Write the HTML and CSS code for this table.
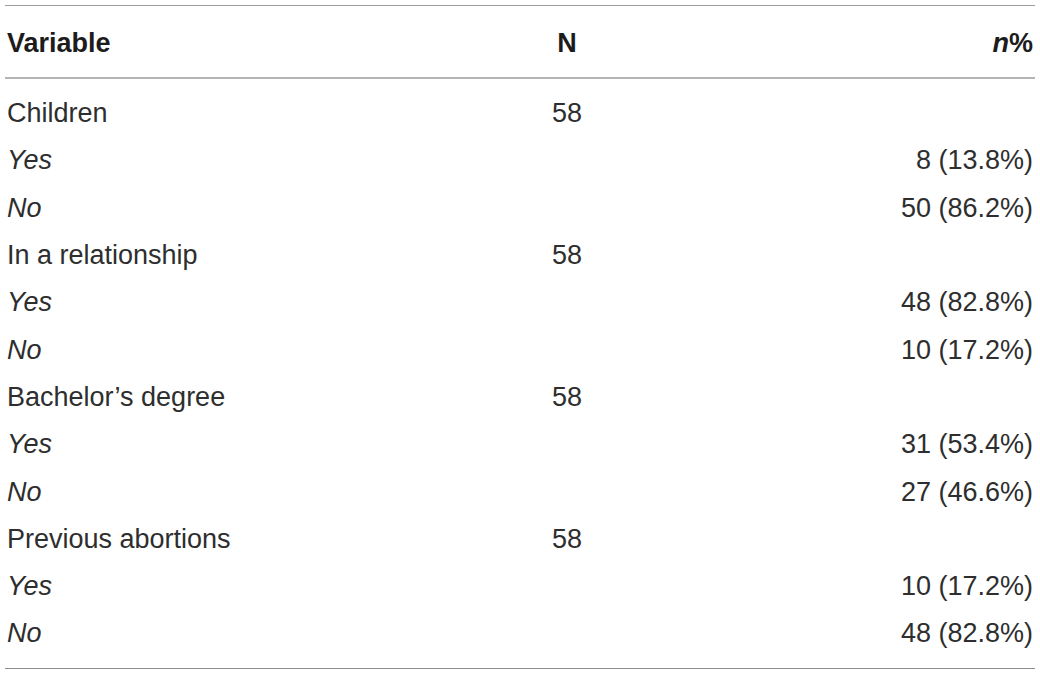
FILE: index.html
```html
<!DOCTYPE html>
<html lang="en">
<head>
<meta charset="utf-8">
<title>Table</title>
<link rel="stylesheet" href="styles.css">
</head>
<body>
<table class="data">
  <colgroup>
    <col class="c-var">
    <col class="c-n">
    <col class="c-pct">
  </colgroup>
  <thead>
    <tr>
      <th class="t-left">Variable</th>
      <th class="t-center">N</th>
      <th class="t-right"><em>n</em>%</th>
    </tr>
  </thead>
  <tbody>
    <tr class="first"><td>Children</td><td class="t-center">58</td><td></td></tr>
    <tr><td class="sub">Yes</td><td></td><td class="t-right">8 (13.8%)</td></tr>
    <tr><td class="sub">No</td><td></td><td class="t-right">50 (86.2%)</td></tr>
    <tr><td>In a relationship</td><td class="t-center">58</td><td></td></tr>
    <tr><td class="sub">Yes</td><td></td><td class="t-right">48 (82.8%)</td></tr>
    <tr><td class="sub">No</td><td></td><td class="t-right">10 (17.2%)</td></tr>
    <tr><td>Bachelor’s degree</td><td class="t-center">58</td><td></td></tr>
    <tr><td class="sub">Yes</td><td></td><td class="t-right">31 (53.4%)</td></tr>
    <tr><td class="sub">No</td><td></td><td class="t-right">27 (46.6%)</td></tr>
    <tr><td>Previous abortions</td><td class="t-center">58</td><td></td></tr>
    <tr><td class="sub">Yes</td><td></td><td class="t-right">10 (17.2%)</td></tr>
    <tr class="last"><td class="sub">No</td><td></td><td class="t-right">48 (82.8%)</td></tr>
  </tbody>
</table>
</body>
</html>
```

FILE: styles.css
```css
html, body {
  margin: 0;
  padding: 0;
  background: #ffffff;
}

body {
  padding: 5px;
  font-family: "Liberation Sans", Arial, Helvetica, sans-serif;
  color: #2e2e2e;
}

.data {
  width: 1030px;
  border-collapse: collapse;
  table-layout: fixed;
  font-size: 27px;
  line-height: 31px;
}

.c-var { width: 475px; }
.c-n { width: 174px; }
.c-pct { width: auto; }

.data thead tr {
  border-top: 1px solid #9c9c9c;
  border-bottom: 2px solid #b4b4b4;
}

.data th {
  height: 67px;
  padding: 4px 2px 0 2px;
  font-weight: bold;
  color: #1c1c1c;
  vertical-align: middle;
}

.data th em {
  font-style: italic;
}

.data td {
  height: 47.3px;
  padding: 0 2px;
  vertical-align: middle;
  font-weight: normal;
}

.data tbody tr.first td {
  padding-top: 11px;
}

.data tbody tr.last td {
  padding-bottom: 10px;
}

.data tbody tr.last {
  border-bottom: 1px solid #8c8c8c;
}

.t-left { text-align: left; }
.t-center { text-align: center; }
.t-right { text-align: right; }

.sub {
  font-style: italic;
}
```
